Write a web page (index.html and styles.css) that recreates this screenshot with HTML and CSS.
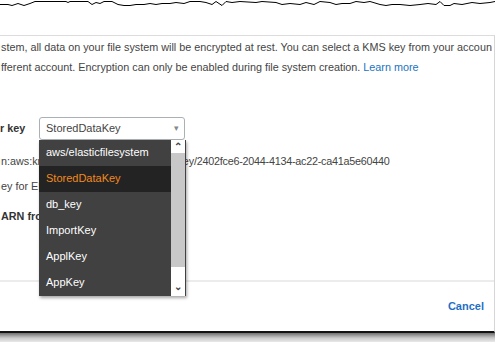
FILE: index.html
```html
<!DOCTYPE html>
<html lang="en">
<head>
    <meta charset="UTF-8">
    <meta name="viewport" content="width=device-width, initial-scale=1.0">
    <title>Enable encryption - KMS key</title>
    <link rel="stylesheet" href="styles.css">
</head>
<body>
    <div class="sheet">
        <svg class="tear" width="495" height="8" viewBox="0 0 495 8">
            <polyline fill="none" stroke="#000" stroke-width="1"
                points="0,4.5 8,4.5 12,5.5 18,3.5 24,5.5 30,3.5 35,1.5 66,1.5 68,2.5 70,1.5 88,1.5 92,4.5 96,2.5 100,3.5 104,1.5 112,1.5 118,4.5 124,5.5 130,5.5 136,4.5 144,4.5 150,3.5 156,4.5 162,3.5 170,3.5 176,2.5 184,3.5 190,1.5 200,1.5 206,2.5 212,4.5 216,1.5 222,5.5 226,1.5 232,2.5 240,1.5 256,2.5 262,1.5 276,2.5 282,4.5 290,3.5 300,4.5 306,2.5 314,4.5 320,1.5 330,2.5 336,4.5 342,3.5 350,3.5 356,1.5 364,2.5 370,1.5 380,4.5 386,5.5 392,4.5 400,4.5 410,5.5 420,4.5 428,3.5 436,4.5 440,1.5 444,5.5 450,5.5 454,3.5 462,4.5 472,2.5 480,3.5 490,2.5 495,1.5"/>
        </svg>

        <div class="dialog">
            <div class="dialog-body">
                <p class="intro">
                    stem, all data on your file system will be encrypted at rest. You can select a KMS key from your accoun<br>
                    fferent account. Encryption can only be enabled during file system creation. <a href="#" class="link">Learn more</a>
                </p>

                <div class="field">
                    <label class="field-label">r key</label>
                    <div class="select-wrap">
                        <div class="select">StoredDataKey<span class="caret">&#9662;</span></div>
                        <div class="menu">
                            <ul class="menu-list">
                                <li>aws/elasticfilesystem</li>
                                <li class="active">StoredDataKey</li>
                                <li>db_key</li>
                                <li>ImportKey</li>
                                <li>ApplKey</li>
                                <li>AppKey</li>
                            </ul>
                            <div class="scrollbar">
                                <span class="scroll-btn">&#8963;</span>
                                <span class="scroll-thumb"></span>
                                <span class="scroll-btn down">&#8964;</span>
                            </div>
                        </div>
                    </div>
                </div>

                <p class="detail arn">n:aws:kms:us-west-2:111122223333:ke<span>y/2402fce6-2044-4134-ac22-ca41a5e60440</span></p>
                <p class="detail desc">ey for EB</p>
                <p class="detail strong">ARN fron</p>
            </div>

            <div class="dialog-footer">
                <a href="#" class="cancel">Cancel</a>
            </div>
        </div>
        <div class="shadow"></div>
    </div>
</body>
</html>
```

FILE: styles.css
```css
* {
    margin: 0;
    padding: 0;
    box-sizing: border-box;
}

body {
    font-family: "Liberation Sans", Arial, sans-serif;
    font-size: 10.8px;
    color: #444;
    background: #fff;
    width: 495px;
    height: 342px;
    overflow: hidden;
}

.sheet {
    width: 495px;
}

.tear {
    display: block;
}

.dialog {
    margin-top: 27px;
    border-top: 1px solid #dcdcdc;
    border-right: 1px solid #d6d6d6;
    border-bottom: 2px solid #111;
    overflow: hidden;
}

.dialog-body {
    height: 244px;
    padding-top: 1px;
    white-space: nowrap;
}

.intro {
    line-height: 20px;
    padding-left: 1px;
}

.link {
    color: #1a73c2;
    text-decoration: none;
}

.field {
    display: flex;
    margin-top: 40px;
    height: 23px;
}

.field-label {
    width: 39px;
    line-height: 23px;
    font-weight: bold;
    color: #333;
}

.select-wrap {
    position: relative;
    width: 146px;
}

.select {
    height: 23px;
    line-height: 21px;
    padding-left: 6px;
    font-size: 11px;
    border: 1px solid #aab0b4;
    border-radius: 3px;
    color: #444;
    position: relative;
}

.caret {
    position: absolute;
    right: 5px;
    top: 0;
    font-size: 9px;
    color: #888;
}

.menu {
    position: absolute;
    top: 23px;
    left: 0;
    width: 147px;
    height: 156px;
    background: #414141;
    display: flex;
    box-shadow: 1px 2px 3px rgba(0, 0, 0, 0.35);
    z-index: 2;
}

.menu-list {
    list-style: none;
    flex: 1;
}

.menu-list li {
    height: 26px;
    line-height: 25px;
    padding-left: 7px;
    font-size: 11px;
    color: #fff;
}

.menu-list li.active {
    background: #232323;
    color: #f08a1e;
}

.scrollbar {
    width: 14px;
    margin-right: 1px;
    background: #fff;
    display: flex;
    flex-direction: column;
}

.scroll-btn {
    height: 13px;
    line-height: 13px;
    text-align: center;
    font-size: 10px;
    font-weight: bold;
    color: #444;
}

.scroll-btn.down {
    margin-top: auto;
    height: 16px;
}

.scroll-thumb {
    height: 114px;
    background: #c8c8c8;
}

.detail {
    line-height: 20px;
    padding-left: 1px;
}

.arn {
    margin-top: 11px;
}

.arn span {
    letter-spacing: -0.25px;
}

.desc {
    margin-top: 5px;
}

.strong {
    margin-top: 10px;
    font-weight: bold;
    color: #333;
}

.dialog-footer {
    border-top: 2px solid #ececec;
    height: 51px;
    padding-top: 14px;
    padding-right: 10px;
    text-align: right;
}

.cancel {
    line-height: 20px;
    font-size: 11px;
    font-weight: bold;
    color: #1f6fc5;
    text-decoration: none;
}

.shadow {
    height: 10px;
    background: linear-gradient(#6f6f6f, #c8c8c8 50%, #f2f2f2);
}
```
